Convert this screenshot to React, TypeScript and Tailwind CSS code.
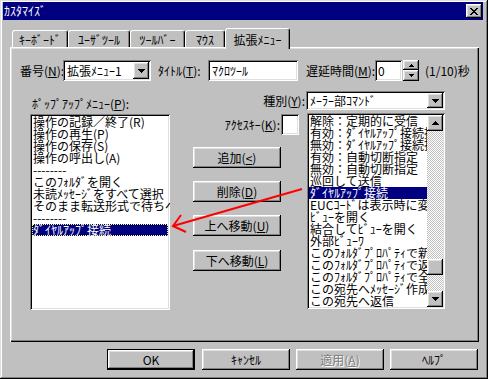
import React from "react";

const RAISED =
  "shadow-[inset_-1px_-1px_#000000,inset_1px_1px_#ffffff,inset_-2px_-2px_#808080,inset_2px_2px_#dfdfdf]";
const SUNKEN =
  "shadow-[inset_1px_1px_#808080,inset_-1px_-1px_#ffffff,inset_2px_2px_#000000,inset_-2px_-2px_#dfdfdf]";

function U({ c }: { c: string }) {
  return <u className="underline decoration-1 underline-offset-[1px]">{c}</u>;
}

function DownArrow() {
  return (
    <svg width="7" height="4" viewBox="0 0 7 4" shapeRendering="crispEdges">
      <path d="M0 0H7V1H6V2H5V3H4V4H3V3H2V2H1V1H0Z" fill="#000" />
    </svg>
  );
}
function UpArrow() {
  return (
    <svg width="7" height="4" viewBox="0 0 7 4" shapeRendering="crispEdges">
      <path d="M0 4H7V3H6V2H5V1H4V0H3V1H2V2H1V3H0Z" fill="#000" />
    </svg>
  );
}
function SmallUp() {
  return (
    <svg width="5" height="3" viewBox="0 0 5 3" shapeRendering="crispEdges">
      <path d="M0 3H5V2H4V1H3V0H2V1H1V2H0Z" fill="#000" />
    </svg>
  );
}
function SmallDown() {
  return (
    <svg width="5" height="3" viewBox="0 0 5 3" shapeRendering="crispEdges">
      <path d="M0 0H5V1H4V2H3V3H2V2H1V1H0Z" fill="#000" />
    </svg>
  );
}

function Btn({ children, className = "" }: { children: React.ReactNode; className?: string }) {
  return (
    <div
      className={`flex items-center justify-center h-[21px] w-[88px] bg-[#c0c0c0] leading-[12px] ${RAISED} ${className}`}
    >
      {children}
    </div>
  );
}

function Combo({ text, w, h }: { text: string; w: string; h: string }) {
  return (
    <div className={`flex items-center bg-white p-[2px] ${SUNKEN} ${w} ${h}`}>
      <div className="flex-1 pl-[2px] leading-[12px] whitespace-nowrap overflow-hidden">{text}</div>
      <div className={`w-[16px] h-full flex items-center justify-center bg-[#c0c0c0] ${RAISED}`}>
        <DownArrow />
      </div>
    </div>
  );
}

function Tab({ label, w, selected = false }: { label: string; w: string; selected?: boolean }) {
  if (selected) {
    return (
      <div
        className={`relative z-10 h-[21px] mb-[-2px] ${w} bg-[#c0c0c0] border-l border-t border-white border-r border-r-black rounded-t-[3px] shadow-[inset_-1px_0_#808080] flex justify-center pt-[5px] leading-[12px]`}
      >
        {label}
      </div>
    );
  }
  return (
    <div
      className={`h-[17px] ${w} bg-[#c0c0c0] border-l border-t border-white border-r border-r-black rounded-t-[3px] shadow-[inset_-1px_0_#808080] flex justify-center pt-[3px] leading-[12px]`}
    >
      {label}
    </div>
  );
}

const leftItems = [
  "操作の記録／終了(R)",
  "操作の再生(P)",
  "操作の保存(S)",
  "操作の呼出し(A)",
  "--------",
  "このﾌｫﾙﾀﾞを開く",
  "未読ﾒｯｾｰｼﾞをすべて選択",
  "そのまま転送形式で待ちへ",
  "--------",
];

const rightItems = [
  "解除：定期的に受信",
  "有効：ﾀﾞｲﾔﾙｱｯﾌﾟ接続指定",
  "無効：ﾀﾞｲﾔﾙｱｯﾌﾟ接続指定",
  "有効：自動切断指定",
  "無効：自動切断指定",
  "巡回して送信",
  "ﾀﾞｲﾔﾙｱｯﾌﾟ接続",
  "EUCｺｰﾄﾞは表示時に変換",
  "ﾋﾞｭｰを開く",
  "結合してﾋﾞｭｰを開く",
  "外部ﾋﾞｭｰﾜ",
  "このﾌｫﾙﾀﾞﾌﾟﾛﾊﾟﾃｨで新規",
  "このﾌｫﾙﾀﾞﾌﾟﾛﾊﾟﾃｨで返信",
  "このﾌｫﾙﾀﾞﾌﾟﾛﾊﾟﾃｨで全員",
  "この宛先へﾒｯｾｰｼﾞ作成",
  "この宛先へ返信",
];

export default function App() {
  return (
    <div className="relative w-[488px] h-[379px] overflow-hidden bg-[#c0c0c0] text-black text-[12px] font-['Noto_Sans_CJK_JP',sans-serif] shadow-[inset_-1px_-1px_#000000,inset_1px_1px_#dfdfdf,inset_-2px_-2px_#808080,inset_2px_2px_#ffffff]">
      {/* Title bar */}
      <div className="ml-[3px] mt-[2px] w-[480px] h-[18px] bg-[#000080] flex items-center justify-between">
        <div className="pl-[1px] text-white leading-[12px]">ｶｽﾀﾏｲｽﾞ</div>
        <div className={`mr-[1px] w-[16px] h-[14px] bg-[#c0c0c0] flex items-center justify-center ${RAISED}`}>
          <svg width="8" height="7" viewBox="0 0 8 7" shapeRendering="crispEdges">
            <path
              d="M0 0h2v1h-2zM6 0h2v1h-2zM1 1h2v1h-2zM5 1h2v1h-2zM2 2h4v1h-4zM3 3h2v1h-2zM2 4h4v1h-4zM1 5h2v1h-2zM5 5h2v1h-2zM0 6h2v1h-2zM6 6h2v1h-2z"
              fill="#000"
            />
          </svg>
        </div>
      </div>

      {/* Tabs */}
      <div className="mt-[8px] ml-[12px] h-[19px] flex items-end">
        <Tab label="ｷｰﾎﾞｰﾄﾞ" w="w-[56px]" />
        <Tab label="ﾕｰｻﾞﾂｰﾙ" w="w-[62px]" />
        <Tab label="ﾂｰﾙﾊﾞｰ" w="w-[55px]" />
        <Tab label="ﾏｳｽ" w="w-[40px]" />
        <Tab label="拡張ﾒﾆｭｰ" w="w-[65px]" selected />
      </div>

      {/* Panel */}
      <div className="ml-[10px] w-[469px] h-[295px] bg-[#c0c0c0] pt-[13px] pl-[10px] shadow-[inset_1px_1px_#ffffff,inset_-1px_-1px_#000000,inset_-2px_-2px_#808080,inset_2px_2px_#dfdfdf]">
        {/* Row 1 */}
        <div className="flex items-center h-[21px]">
          <div className="w-[43px] leading-[12px] whitespace-nowrap">
            番号(<U c="N" />):
          </div>
          <Combo text="拡張ﾒﾆｭｰ1" w="w-[88px]" h="h-[21px]" />
          <div className="ml-[7px] w-[50px] leading-[12px] whitespace-nowrap">
            ﾀｲﾄﾙ(<U c="T" />):
          </div>
          <div className={`w-[90px] h-[21px] bg-white flex items-center pl-[4px] leading-[12px] ${SUNKEN}`}>
            ﾏｸﾛﾂｰﾙ
          </div>
          <div className="ml-[8px] w-[69px] leading-[12px] whitespace-nowrap">
            遅延時間(<U c="M" />):
          </div>
          <div className={`w-[27px] h-[21px] bg-white flex items-center pl-[3px] leading-[12px] ${SUNKEN}`}>
            0
          </div>
          <div className="w-[16px] h-[21px] flex flex-col ml-[1px]">
            <div className={`h-[10px] flex items-center justify-center bg-[#c0c0c0] ${RAISED}`}>
              <SmallUp />
            </div>
            <div className={`h-[11px] flex items-center justify-center bg-[#c0c0c0] ${RAISED}`}>
              <SmallDown />
            </div>
          </div>
          <div className="ml-[6px] leading-[12px] whitespace-nowrap">(1/10)秒</div>
        </div>

        {/* Row 2 */}
        <div className="flex items-start mt-[10px]">
          {/* left column */}
          <div className="ml-[10px] w-[140px] pt-[7px] flex flex-col">
            <div className="pl-[2px] h-[12px] leading-[12px] whitespace-nowrap">
              ﾎﾟｯﾌﾟｱｯﾌﾟﾒﾆｭｰ(<U c="P" />):
            </div>
            <div className={`mt-[4px] h-[196px] bg-white p-[2px] overflow-hidden ${SUNKEN}`}>
              {leftItems.map((t, i) => (
                <div key={i} className="h-[12px] leading-[12px] whitespace-nowrap pl-[1px]">
                  {t}
                </div>
              ))}
              <div className="h-[12px] leading-[12px] whitespace-nowrap pl-[1px] bg-[#000080] text-white outline-1 outline-dotted outline-[#ffff80] -outline-offset-1">
                ﾀﾞｲﾔﾙｱｯﾌﾟ接続
              </div>
            </div>
          </div>

          {/* right group */}
          <div className="ml-[23px] w-[252px] flex flex-col">
            <div className="flex items-center justify-end h-[19px]">
              <div className="leading-[12px] whitespace-nowrap pr-[1px]">
                種別(<U c="Y" />):
              </div>
              <Combo text="ﾒｰﾗｰ部ｺﾏﾝﾄﾞ" w="w-[139px]" h="h-[19px]" />
            </div>
            <div className="flex mt-[3px]">
              <div className="w-[106px] flex flex-col">
                <div className="mt-[1px] flex items-center justify-end h-[21px]">
                  <div className="leading-[12px] whitespace-nowrap pr-[1px]">
                    ｱｸｾｽｷｰ(<U c="K" />):
                  </div>
                  <div className={`w-[18px] h-[21px] bg-white ${SUNKEN}`} />
                </div>
                <Btn className="mt-[12px]">
                  追加(<U c="<" />)
                </Btn>
                <Btn className="mt-[13px]">
                  削除(<U c="D" />)
                </Btn>
                <Btn className="mt-[13px]">
                  上へ移動(<U c="U" />)
                </Btn>
                <Btn className="mt-[14px]">
                  下へ移動(<U c="L" />)
                </Btn>
              </div>
              <div className={`ml-[8px] w-[138px] h-[196px] bg-white p-[2px] flex ${SUNKEN}`}>
                <div className="flex-1 overflow-hidden">
                  {rightItems.map((t, i) => (
                    <div
                      key={i}
                      className={`h-[12px] leading-[12px] whitespace-nowrap pl-[1px] ${
                        i === 6 ? "bg-[#000080] text-white" : ""
                      }`}
                    >
                      {t}
                    </div>
                  ))}
                </div>
                <div className="w-[16px] flex flex-col">
                  <div className={`h-[16px] flex items-center justify-center bg-[#c0c0c0] ${RAISED}`}>
                    <UpArrow />
                  </div>
                  <div className="flex-1 flex flex-col bg-[image:repeating-conic-gradient(#ffffff_0_25%,#c0c0c0_0_50%)] bg-[length:2px_2px]">
                    <div className={`mt-[128px] h-[16px] bg-[#c0c0c0] ${RAISED}`} />
                  </div>
                  <div className={`h-[16px] flex items-center justify-center bg-[#c0c0c0] ${RAISED}`}>
                    <DownArrow />
                  </div>
                </div>
              </div>
            </div>
          </div>
        </div>
      </div>

      {/* Bottom buttons */}
      <div className="mt-[7px] ml-[107px] flex">
        <div className="w-[88px] h-[21px] flex items-center justify-center leading-[12px] bg-[#c0c0c0] shadow-[inset_0_0_0_1px_#000000,inset_-2px_-2px_#000000,inset_2px_2px_#ffffff,inset_-3px_-3px_#808080,inset_3px_3px_#dfdfdf]">
          OK
        </div>
        <Btn className="ml-[7px]">ｷｬﾝｾﾙ</Btn>
        <Btn className="ml-[6px]">
          <span className="text-[#808080] [text-shadow:1px_1px_#ffffff]">
            適用(<U c="A" />)
          </span>
        </Btn>
        <Btn className="ml-[6px]">ﾍﾙﾌﾟ</Btn>
      </div>

      {/* Red annotation arrow */}
      <svg className="absolute left-0 top-0 pointer-events-none" width="488" height="379" viewBox="0 0 488 379">
        <line x1="302" y1="189" x2="173" y2="226" stroke="#ff0000" strokeWidth="2" />
        <polyline points="181,215 173,226 186,232" fill="none" stroke="#ff0000" strokeWidth="2" />
      </svg>
    </div>
  );
}
